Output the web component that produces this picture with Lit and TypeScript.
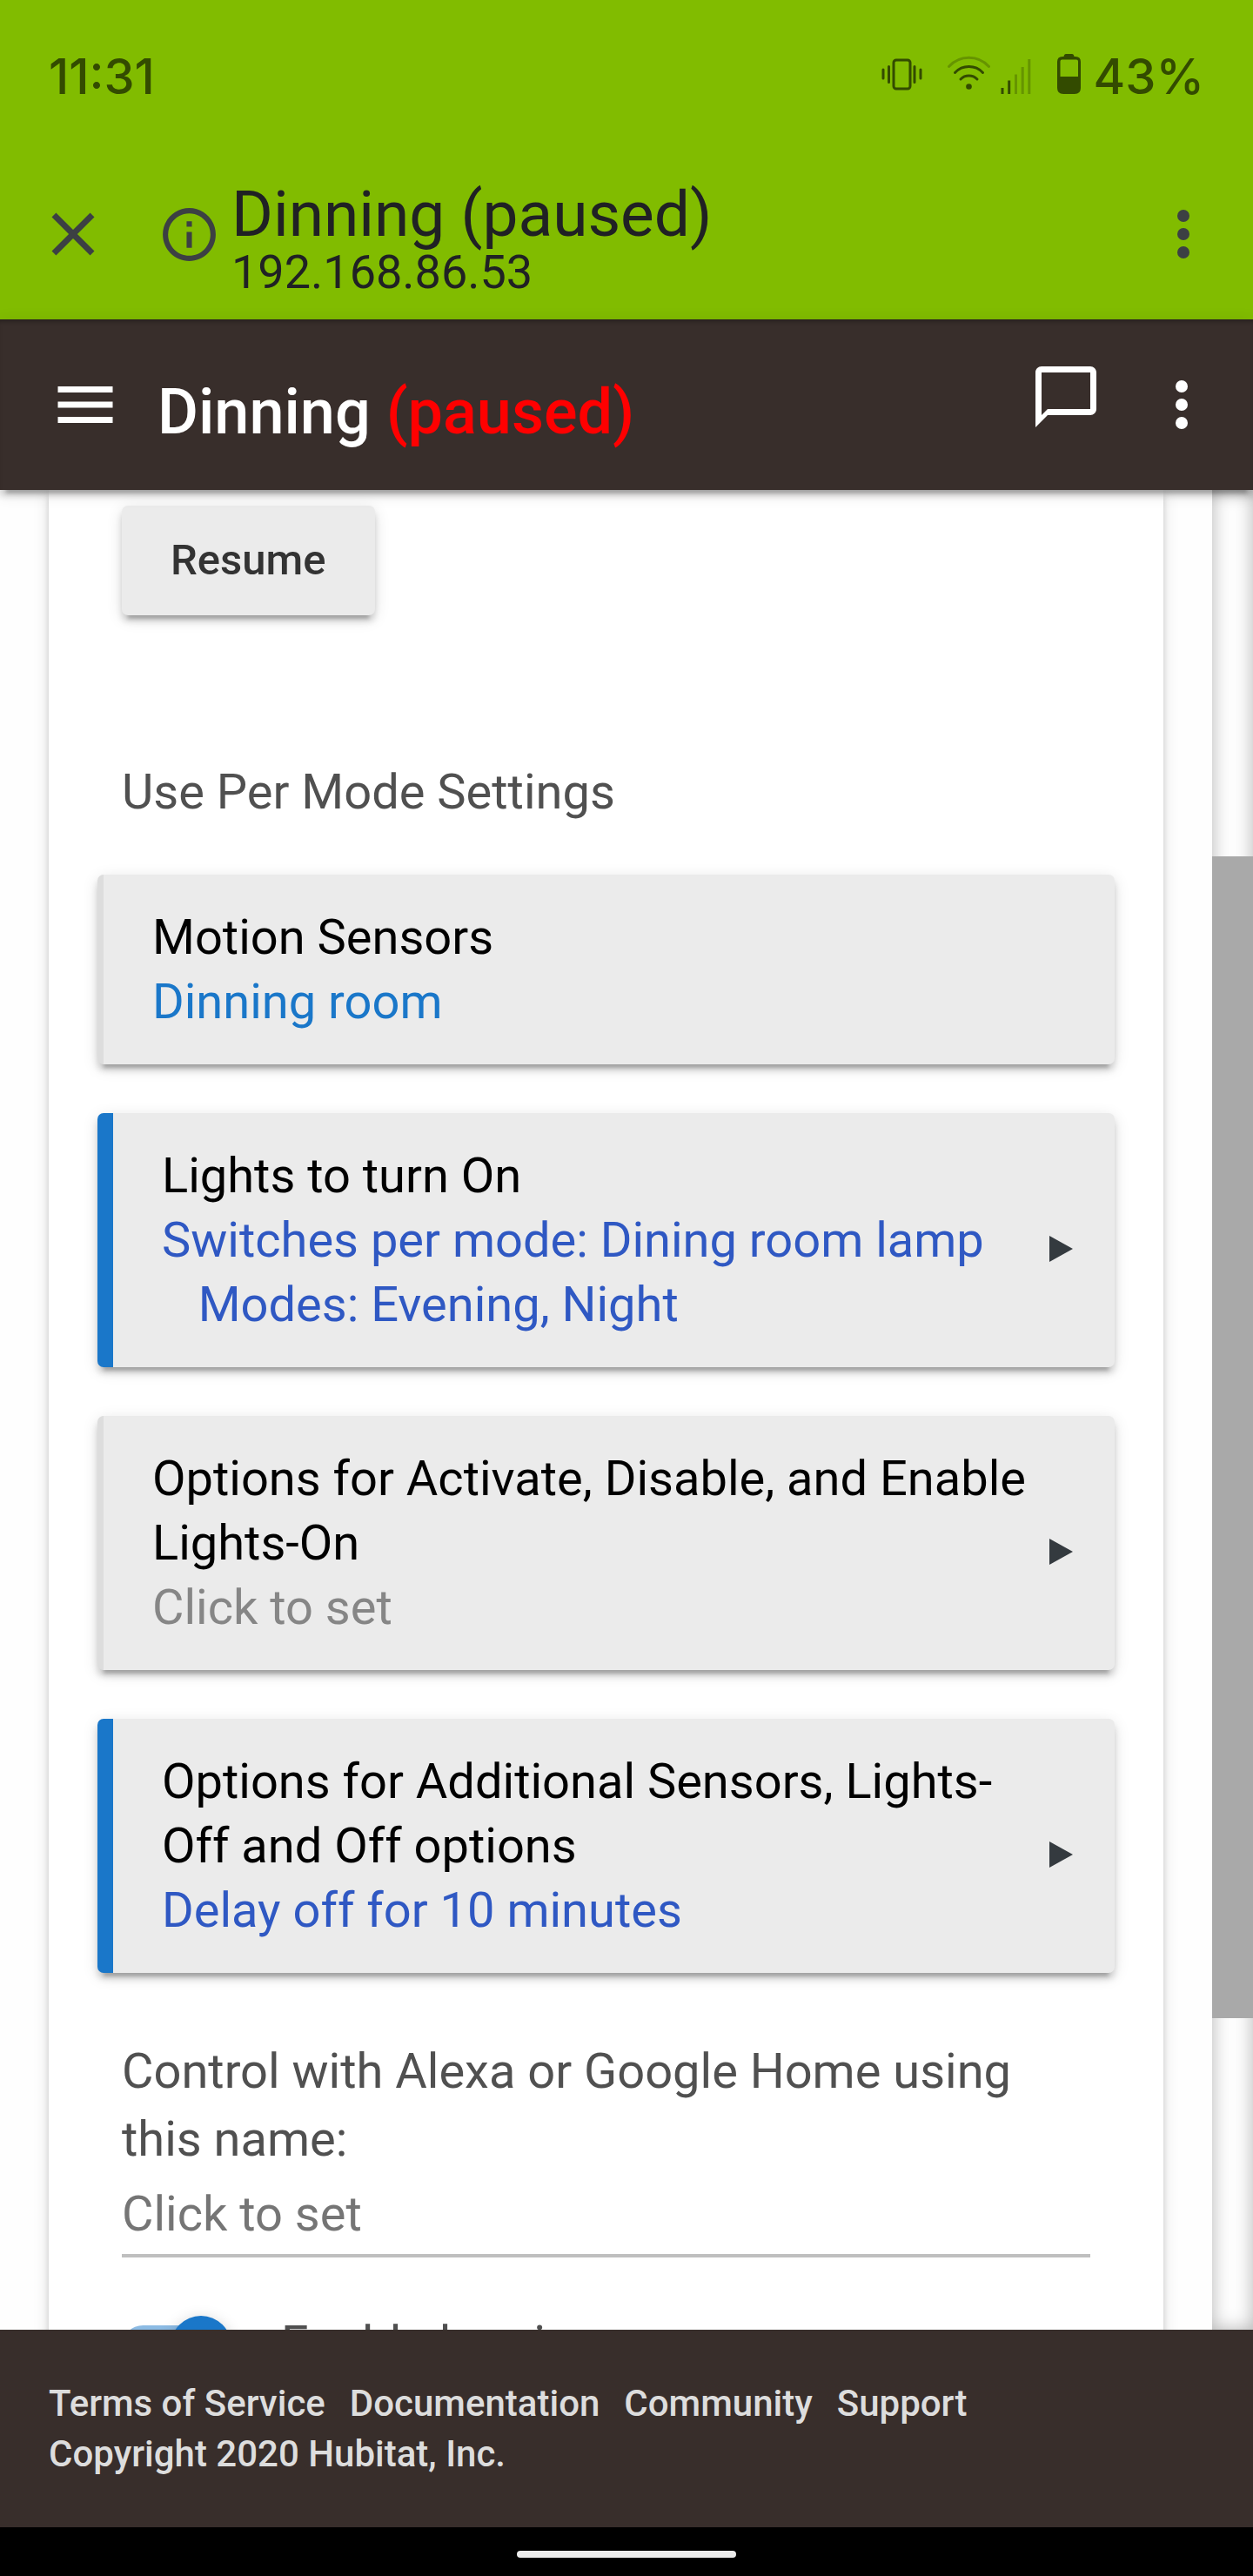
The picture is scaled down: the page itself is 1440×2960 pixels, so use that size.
import { LitElement, html, css, nothing } from "lit";
import { customElement, property, state } from "lit/decorators.js";

interface Setting {
  title: string;
  lines: string[];
  tone: "accent" | "value" | "empty";
  marked: boolean;
  arrow: boolean;
}

const SETTINGS: Setting[] = [
  { title: "Motion Sensors", lines: ["Dinning room"], tone: "accent", marked: false, arrow: false },
  {
    title: "Lights to turn On",
    lines: ["Switches per mode: Dining room lamp", "\u00a0\u00a0\u00a0Modes: Evening, Night"],
    tone: "value",
    marked: true,
    arrow: true,
  },
  {
    title: "Options for Activate, Disable, and Enable Lights-On",
    lines: ["Click to set"],
    tone: "empty",
    marked: false,
    arrow: true,
  },
  {
    title: "Options for Additional Sensors, Lights-Off and Off options",
    lines: ["Delay off for 10 minutes"],
    tone: "value",
    marked: true,
    arrow: true,
  },
];

const LINKS = ["Terms of Service", "Documentation", "Community", "Support"];

@customElement("status-bar")
export class StatusBar extends LitElement {
  static styles = css`
    :host {
      display: flex;
      align-items: center;
      justify-content: space-between;
      padding: 54px 56px 49px;
      color: #334b00;
      font: 500 56px/68px Inter, Roboto, sans-serif;
    }
    .icons {
      display: flex;
      align-items: center;
    }
    svg {
      display: block;
      margin-bottom: 8px;
      fill: none;
      stroke: currentColor;
      stroke-width: 3;
      stroke-linecap: round;
    }
    .faint {
      opacity: 0.35;
    }
    .solid {
      fill: currentColor;
      stroke: none;
    }
    .wifi {
      margin-left: 28px;
    }
    .signal {
      margin-left: 12px;
    }
    .battery {
      margin-left: 28px;
      margin-right: 14px;
    }
  `;

  render() {
    return html`
      <span>11:31</span>
      <div class="icons">
        <svg width="48" height="48" viewBox="0 0 48 48" aria-label="Vibrate">
          <rect x="14" y="9" width="19" height="33" rx="3" />
          <path d="M2 20v10M8.500 16.500v18M38 16.500v18M45 20v10" />
        </svg>
        <svg class="wifi" width="49" height="48" viewBox="0 0 49 48" aria-label="Wi-Fi">
          <path class="faint" d="M1.500 16.500a31 31 0 0 1 46 0" />
          <path d="M8.500 23.500a22 22 0 0 1 32 0M15 31a13.500 13.500 0 0 1 19 0" />
          <circle class="solid" cx="24.500" cy="39.500" r="3.300" />
        </svg>
        <svg class="signal" width="36" height="48" viewBox="0 0 36 48" aria-label="Signal">
          <path class="solid" d="M.500 41h3v7h-3zM8.200 32.500h3V48h-3z" />
          <path class="solid faint" d="M16 25.500h3V48h-3zM23.700 17h3v31h-3zM31.300 8h3v40h-3z" />
        </svg>
        <svg class="battery" width="29" height="48" viewBox="0 0 29 48" aria-label="Battery">
          <path
            class="solid"
            fill-rule="evenodd"
            d="M11 2h7q2 0 2.500 3H22q6 0 6 6v30q0 7-7 7H8q-7 0-7-7V11q0-6 6-6h1.500Q9 2 11 2zM6.500 8.500q-2 0-2 2V28H25V10.500q0-2-2-2z"
          />
        </svg>
        <span>43%</span>
      </div>
    `;
  }
}

@customElement("browser-bar")
export class BrowserBar extends LitElement {
  static styles = css`
    :host {
      display: flex;
      align-items: center;
      padding: 26px 38px 26px 42px;
      color: #202124;
    }
    button {
      border: 0;
      padding: 0;
      background: none;
      color: #3c4043;
    }
    svg {
      display: block;
      fill: currentColor;
    }
    .info {
      margin: 0 12px 0 55px;
    }
    .page {
      flex: 1;
      min-width: 0;
      padding-top: 10px;
    }
    .name {
      font-size: 73px;
      line-height: 78px;
    }
    .address {
      font-size: 54px;
      line-height: 56px;
    }
  `;

  render() {
    return html`
      <button aria-label="Close">
        <svg width="84" height="84" viewBox="0 0 24 24">
          <path d="M19 6.410 17.590 5 12 10.590 6.410 5 5 6.410 10.590 12 5 17.590 6.410 19 12 13.410 17.590 19 19 17.590 13.410 12z" />
        </svg>
      </button>
      <button class="info" aria-label="Page information">
        <svg width="73" height="73" viewBox="0 0 24 24">
          <path
            d="M11 7h2v2h-2zm0 4h2v6h-2zm1-9C6.480 2 2 6.480 2 12s4.480 10 10 10 10-4.480 10-10S17.520 2 12 2zm0 18c-4.410 0-8-3.590-8-8s3.590-8 8-8 8 3.590 8 8-3.590 8-8 8z"
          />
        </svg>
      </button>
      <div class="page">
        <div class="name">Dinning (paused)</div>
        <div class="address">192.168.86.53</div>
      </div>
      <button aria-label="Browser menu">
        <svg width="84" height="84" viewBox="0 0 24 24">
          <circle cx="12" cy="6" r="2" /><circle cx="12" cy="12" r="2" /><circle cx="12" cy="18" r="2" />
        </svg>
      </button>
    `;
  }
}

@customElement("app-header")
export class AppHeader extends LitElement {
  static styles = css`
    :host {
      display: flex;
      align-items: center;
      height: 196px;
      padding: 0 40px 0 56px;
      box-sizing: border-box;
      background: #382e2b;
      color: #fff;
      position: relative;
      z-index: 1;
      box-shadow:
        inset 0 5px 5px -3px rgba(0, 0, 0, 0.35),
        0 7px 7px rgba(0, 0, 0, 0.14),
        0 11px 4px -7px rgba(0, 0, 0, 0.2),
        0 4px 18px rgba(0, 0, 0, 0.12);
    }
    button {
      border: 0;
      padding: 0;
      background: none;
      color: inherit;
    }
    svg {
      display: block;
      fill: currentColor;
    }
    h1 {
      flex: 1;
      margin: 0 0 0 41px;
      padding-top: 18px;
      font-size: 72px;
      line-height: 82px;
      font-weight: 500;
    }
    .state {
      color: #f00;
    }
    .chat {
      margin-right: 49px;
      padding-bottom: 18px;
    }
  `;

  render() {
    return html`
      <button aria-label="Navigation">
        <svg width="84" height="84" viewBox="0 0 24 24"><path d="M3 18h18v-2H3zm0-5h18v-2H3zm0-7v2h18V6z" /></svg>
      </button>
      <h1>Dinning <span class="state">(paused)</span></h1>
      <button class="chat" aria-label="Messages">
        <svg width="84" height="84" viewBox="0 0 24 24">
          <path d="M20 2H4c-1.100 0-2 .900-2 2v18l4-4h14c1.100 0 2-.900 2-2V4c0-1.100-.900-2-2-2zm0 14H6l-2 2V4h16z" />
        </svg>
      </button>
      <button aria-label="More">
        <svg width="84" height="84" viewBox="0 0 24 24">
          <circle cx="12" cy="6" r="2" /><circle cx="12" cy="12" r="2" /><circle cx="12" cy="18" r="2" />
        </svg>
      </button>
    `;
  }
}

@customElement("setting-tile")
export class SettingTile extends LitElement {
  @property({ attribute: false }) setting!: Setting;

  static styles = css`
    :host {
      display: block;
    }
    .tile {
      display: flex;
      align-items: center;
      width: 100%;
      box-sizing: border-box;
      margin: 0;
      padding: 35px 46px 35px 56px;
      border: 0 solid #ddd;
      border-left-width: 7px;
      border-radius: 7px;
      background: #ebebeb;
      color: #000;
      font: inherit;
      line-height: 74px;
      text-align: left;
      box-shadow:
        0 7px 7px rgba(0, 0, 0, 0.14),
        0 11px 4px -7px rgba(0, 0, 0, 0.2),
        0 4px 18px rgba(0, 0, 0, 0.12);
    }
    .marked {
      border-left: 18px solid #1a77c9;
    }
    .text {
      flex: 1;
      min-width: 0;
    }
    .line {
      display: block;
    }
    .accent {
      color: #1a77c9;
    }
    .value {
      color: #2f58c3;
    }
    .empty {
      color: #868686;
    }
    .arrow {
      flex: none;
      margin: 20px 0 0 16px;
      fill: #343a3f;
    }
  `;

  render() {
    const s = this.setting;
    return html`
      <button class="tile ${s.marked ? "marked" : ""}">
        <span class="text">
          <span class="line">${s.title}</span>
          ${s.lines.map((line) => html`<span class="line ${s.tone}">${line}</span>`)}
        </span>
        ${s.arrow
          ? html`<svg class="arrow" width="30" height="30" viewBox="0 0 30 30"><path d="M1 0 28 15 1 30z" /></svg>`
          : nothing}
      </button>
    `;
  }
}

@customElement("app-root")
export class AppRoot extends LitElement {
  @state() private logging = true;

  static styles = css`
    :host {
      display: flex;
      flex-direction: column;
      height: 100vh;
      overflow: hidden;
      background: #fefefe;
      font: 400 56px/78px Roboto, "Liberation Sans", sans-serif;
      color: #505050;
    }
    .system {
      background: #81bc00;
    }
    .viewport {
      flex: 1;
      min-height: 0;
      display: flex;
      overflow: hidden;
    }
    .content {
      flex: 1;
      min-width: 0;
      padding: 0 56px;
    }
    .card {
      min-height: 100%;
      box-sizing: border-box;
      padding: 18px 56px 0;
      background: #fff;
      box-shadow:
        0 7px 7px rgba(0, 0, 0, 0.14),
        0 11px 4px -7px rgba(0, 0, 0, 0.2),
        0 4px 18px rgba(0, 0, 0, 0.12);
    }
    .inset {
      padding: 0 28px;
    }
    .resume {
      display: block;
      height: 126px;
      padding: 0 56px;
      border: 0;
      border-radius: 7px;
      background: #ebebeb;
      color: #333;
      font: 500 49px/126px Roboto, sans-serif;
      box-shadow:
        0 7px 7px rgba(0, 0, 0, 0.14),
        0 11px 4px -7px rgba(0, 0, 0, 0.2),
        0 4px 18px rgba(0, 0, 0, 0.12);
    }
    .heading {
      margin: 164px 0 56px;
      font: inherit;
    }
    .tiles {
      display: grid;
      gap: 56px;
      margin-bottom: 74px;
    }
    .label {
      display: block;
    }
    .name {
      display: block;
      width: 100%;
      height: 97px;
      box-sizing: border-box;
      margin: 0;
      padding: 0;
      border: 0;
      border-bottom: 4px solid #bfbfbf;
      border-radius: 0;
      outline: 0;
      background: none;
      color: inherit;
      font: inherit;
    }
    .name::placeholder {
      color: #757575;
      opacity: 1;
    }
    .switch {
      display: flex;
      align-items: center;
      gap: 57px;
      margin-top: 60px;
    }
    .caption {
      padding-bottom: 6px;
    }
    .toggle {
      appearance: none;
      display: flex;
      align-items: center;
      width: 126px;
      height: 49px;
      margin: 0;
      border-radius: 25px;
      background: #bdbdbd;
    }
    .toggle::before {
      content: "";
      width: 70px;
      height: 70px;
      flex: none;
      border-radius: 50%;
      background: #fafafa;
      box-shadow:
        0 7px 7px rgba(0, 0, 0, 0.14),
        0 4px 18px rgba(0, 0, 0, 0.2);
    }
    .toggle:checked {
      justify-content: flex-end;
      background: #8cbbe4;
    }
    .toggle:checked::before {
      background: #1a77c9;
    }
    .scrollbar {
      flex: none;
      display: grid;
      grid-template-rows: 421fr 1335fr 358fr;
      width: 47px;
      box-shadow: inset 0 0 21px rgba(0, 0, 0, 0.3);
    }
    .thumb {
      grid-row: 2;
      background: #a9a9a9;
    }
    .footer {
      padding: 56px 56px 55px;
      background: #382e2b;
      color: #ddd;
      font-size: 42px;
      font-weight: 500;
      line-height: 58px;
    }
    .links {
      display: flex;
      gap: 28px;
    }
    .links a {
      color: inherit;
      text-decoration: none;
    }
    .gesture {
      display: flex;
      align-items: center;
      justify-content: center;
      height: 56px;
      padding-top: 6px;
      box-sizing: border-box;
      background: #000;
    }
    .pill {
      width: 252px;
      height: 8px;
      border-radius: 4px;
      background: #ebebeb;
    }
  `;

  private toggle(e: Event) {
    this.logging = (e.target as HTMLInputElement).checked;
  }

  render() {
    return html`
      <div class="system">
        <status-bar></status-bar>
        <browser-bar></browser-bar>
      </div>
      <app-header></app-header>
      <div class="viewport">
        <main class="content">
          <div class="card">
            <div class="inset">
              <button class="resume">Resume</button>
              <h2 class="heading">Use Per Mode Settings</h2>
            </div>
            <div class="tiles">
              ${SETTINGS.map((s) => html`<setting-tile .setting=${s}></setting-tile>`)}
            </div>
            <div class="inset">
              <label class="label" for="voice-name">Control with Alexa or Google Home using this name:</label>
              <input class="name" id="voice-name" type="text" placeholder="Click to set" />
              <label class="switch">
                <input class="toggle" type="checkbox" .checked=${this.logging} @change=${this.toggle} />
                <span class="caption">Enable logging</span>
              </label>
            </div>
          </div>
        </main>
        <div class="scrollbar"><div class="thumb"></div></div>
      </div>
      <footer class="footer">
        <nav class="links">${LINKS.map((link) => html`<a href="#">${link}</a>`)}</nav>
        <div>Copyright 2020 Hubitat, Inc.</div>
      </footer>
      <div class="gesture"><div class="pill"></div></div>
    `;
  }
}
